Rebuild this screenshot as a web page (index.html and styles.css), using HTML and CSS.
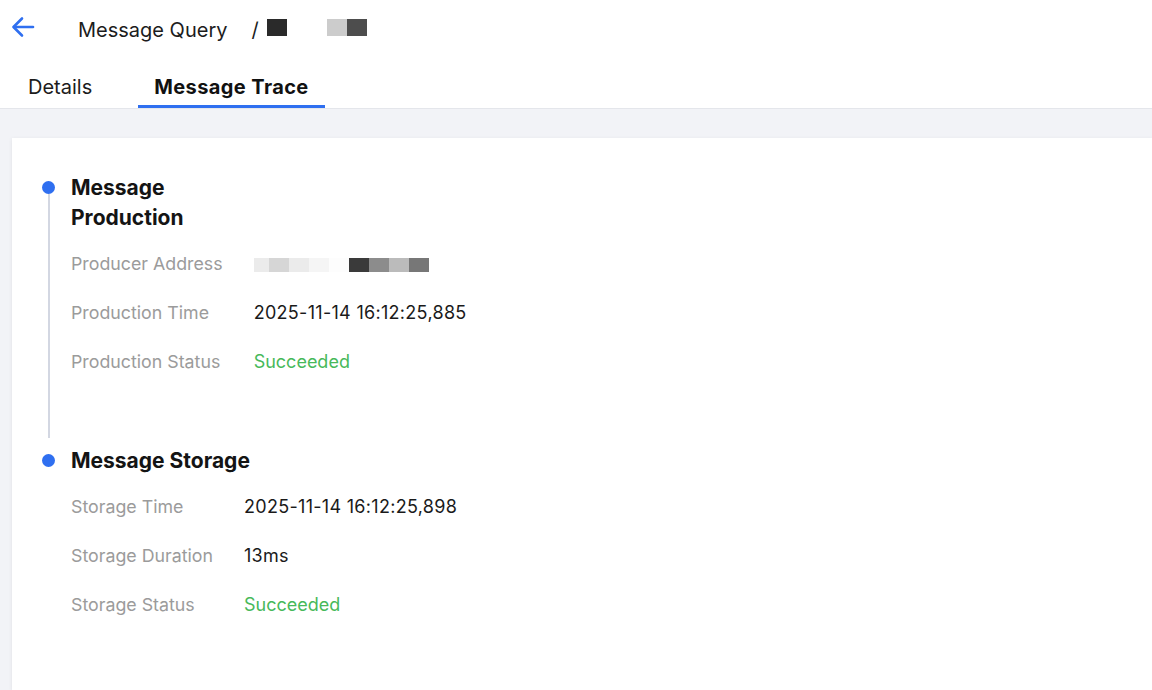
FILE: index.html
```html
<!DOCTYPE html>
<html lang="en">
<head>
<meta charset="utf-8">
<title>Message Trace</title>
<link rel="stylesheet" href="styles.css">
</head>
<body>
<header class="topbar">
  <a class="back" href="#" aria-label="Back">
    <svg width="24" height="22" viewBox="0 0 24 22" fill="none" stroke="#2f6ff0" stroke-width="2.6" stroke-linecap="round" stroke-linejoin="round">
      <path d="M22 11H3"/>
      <path d="M11 2.5L2.5 11L11 19.5"/>
    </svg>
  </a>
  <div class="crumb">
    <span class="crumb-title">Message Query</span>
    <span class="crumb-sep">/</span>
    <span class="mosaic m-head">
      <i style="background:#2a2a2a"></i><i style="background:#fff"></i><i style="background:#fff"></i><i style="background:#cccccc"></i><i style="background:#4d4d4d"></i>
    </span>
  </div>
</header>
<nav class="tabs">
  <a class="tab" href="#">Details</a>
  <a class="tab active" href="#">Message Trace</a>
</nav>
<main class="content">
  <section class="card">
    <div class="timeline">
      <div class="tl-item">
        <div class="tl-rail"><span class="tl-dot"></span><span class="tl-line"></span></div>
        <div class="tl-body">
          <h3 class="tl-title">Message Production</h3>
          <table class="desc desc-prod">
            <tr><th>Producer Address</th><td>
              <span class="mosaic m-addr">
                <i style="background:#ebebeb;width:15px"></i><i style="background:#d6d6d6"></i><i style="background:#ebebeb"></i><i style="background:#f5f5f5"></i><i style="background:#fdfdfd"></i><i style="background:#3a3a3a"></i><i style="background:#8c8c8c"></i><i style="background:#bbbbbb"></i><i style="background:#777777"></i>
              </span>
            </td></tr>
            <tr><th>Production Time</th><td>2025-11-14 16:12:25,885</td></tr>
            <tr><th>Production Status</th><td class="ok">Succeeded</td></tr>
          </table>
        </div>
      </div>
      <div class="tl-item last">
        <div class="tl-rail"><span class="tl-dot"></span></div>
        <div class="tl-body">
          <h3 class="tl-title">Message Storage</h3>
          <table class="desc">
            <tr><th>Storage Time</th><td>2025-11-14 16:12:25,898</td></tr>
            <tr><th>Storage Duration</th><td>13ms</td></tr>
            <tr><th>Storage Status</th><td class="ok">Succeeded</td></tr>
          </table>
        </div>
      </div>
    </div>
  </section>
</main>
</body>
</html>
```
FILE: styles.css
```css
* { box-sizing: border-box; }
html, body { margin: 0; padding: 0; }
body {
  font-family: Inter, "Noto Sans", "Liberation Sans", sans-serif;
  color: #1a1a1a;
  background: #ffffff;
  height: 690px;
  overflow: hidden;
  display: flex;
  flex-direction: column;
}
a { color: inherit; text-decoration: none; }

.topbar {
  height: 56px;
  flex: none;
  display: flex;
  align-items: flex-start;
  padding-left: 11px;
  padding-top: 16px;
}
.back { display: flex; width: 24px; height: 22px; }
.crumb {
  display: flex;
  align-items: center;
  margin-left: 43px;
  margin-top: 2px;
  font-size: 20px;
  line-height: 24px;
  color: #1c1c1c;
}
.crumb-sep { margin-left: 24px; margin-right: 8px; }
.mosaic { display: inline-flex; }
.mosaic i { display: block; width: 20px; }
.m-head { height: 17px; margin-top: -5px; }
.m-addr { height: 14px; vertical-align: middle; }

.tabs {
  display: flex;
  flex: none;
  padding-left: 12px;
  gap: 30px;
  height: 53px;
  border-bottom: 1px solid #e4e6eb;
}
.tab {
  padding: 19px 16px 0;
  font-size: 20px;
  line-height: 24px;
  color: #1c1c1c;
  border-bottom: 3px solid transparent;
  height: 52px;
}
.tab.active {
  font-weight: 700;
  letter-spacing: 0.4px;
  border-bottom-color: #2f6ff0;
  color: #111;
}

.content {
  flex: 1;
  background: #f2f3f7;
  padding: 29px 0 0 12px;
  display: flex;
}
.card {
  flex: 1;
  background: #fff;
  box-shadow: 0 1px 4px rgba(0, 0, 0, 0.08);
  padding: 35px 0 0 30px;
}

.tl-item { display: flex; gap: 16px; }
.tl-item:not(.last) { padding-bottom: 60px; }
.tl-item:not(.last) .tl-rail { margin-bottom: -60px; }
.tl-rail {
  width: 13px;
  display: flex;
  flex-direction: column;
  align-items: center;
  padding-top: 8px;
}
.tl-dot {
  width: 13px;
  height: 13px;
  border-radius: 50%;
  background: #2f6ff0;
  flex: none;
}
.tl-line {
  flex: 1;
  width: 2px;
  background: #d3d7e2;
  margin-bottom: 8px;
}
.tl-title {
  margin: 0;
  font-size: 21px;
  line-height: 30px;
  font-weight: 700;
  color: #141414;
  max-width: 190px;
}
.desc {
  border-collapse: collapse;
  margin-top: 6px;
  font-size: 18px;
}
.desc th {
  text-align: left;
  font-weight: 400;
  font-size: 17.8px;
  color: #9b9b9b;
  padding: 0 31px 0 0;
  height: 49px;
  white-space: nowrap;
}
.desc td {
  padding: 0;
  color: #1a1a1a;
  white-space: nowrap;
  letter-spacing: 0.3px;
}
.desc td.ok { color: #47b95a; letter-spacing: 0; }
```
